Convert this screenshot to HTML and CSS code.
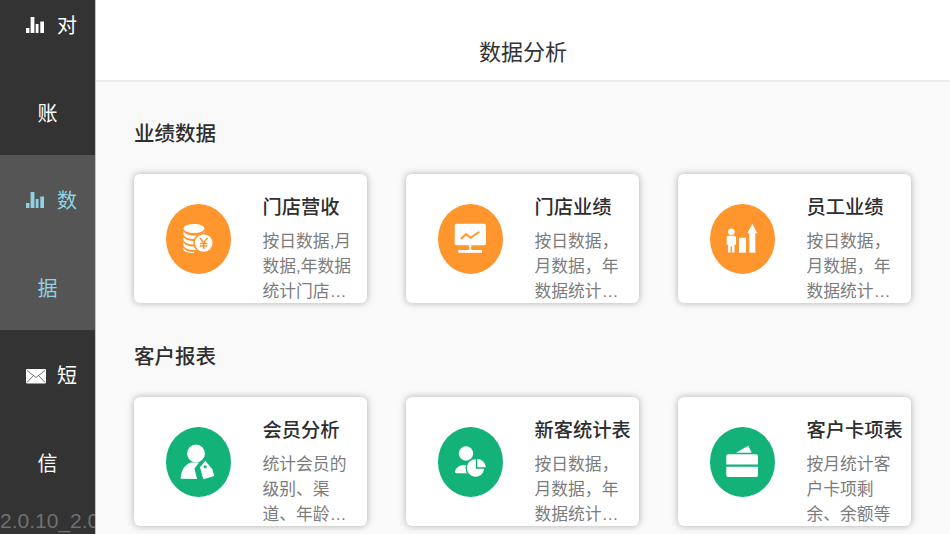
FILE: index.html
```html
<!DOCTYPE html>
<html lang="zh-CN">

<head>
  <meta charset="UTF-8">
  <title>数据分析</title>
  <link rel="stylesheet" href="styles.css">
</head>

<body>
  <aside class="sidebar">
    <nav class="nav">
      <a class="nav-item">
        <svg class="nav-icon" width="18" height="17" viewBox="0 0 18 17"><path d="M0 11h3.400v5H0zM4.600 0h3.800v16H4.600zM9.700 7h2.800v9H9.700zM14.300 4.500H18V16h-3.700z"/></svg>对账
      </a>
      <a class="nav-item active">
        <svg class="nav-icon" width="18" height="17" viewBox="0 0 18 17"><path d="M0 11h3.400v5H0zM4.600 0h3.800v16H4.600zM9.700 7h2.800v9H9.700zM14.300 4.500H18V16h-3.700z"/></svg>数据
      </a>
      <a class="nav-item">
        <svg class="nav-icon mail" width="20" height="15" viewBox="0 0 20 15"><rect width="20" height="14.500" rx="1"/><path class="mail-line" d="M1 1.500l9 7 9-7M1 13.500l6.500-7M19 13.500l-6.500-7"/></svg>短信
      </a>
    </nav>
    <div class="version">2.0.10_2.0.10</div>
  </aside>

  <main class="main">
    <header class="header">数据分析</header>

    <section class="section">
      <h2 class="section-title">业绩数据</h2>
      <div class="cards">
        <div class="card">
          <svg class="card-icon orange" viewBox="0 0 65 70">
            <ellipse class="bg" cx="32.500" cy="35" rx="32.500" ry="35"/>
            <ellipse class="fg" cx="28" cy="24.500" rx="10.500" ry="4.500"/>
            <path class="fg" d="M17.500 27c1 3 5.500 4.500 10.500 4.500s9.500-1.500 10.500-4.500v3.500c-1 3-5.500 4.500-10.500 4.500s-9.500-1.500-10.500-4.500zM17.500 32.500c1 3 5.500 4.500 10.500 4.500s9.500-1.500 10.500-4.500V36c-1 3-5.500 4.500-10.500 4.500S18.500 39 17.500 36zM17.500 38c1 3 5.500 4.500 10.500 4.500s9.500-1.500 10.500-4.500v3.500c-1 3-5.500 4.500-10.500 4.500S18.500 44.500 17.500 41.500zM17.500 43.500c1 3 5.500 4.500 10.500 4.500v1c-5 0-9.500-1-10.500-3z"/>
            <circle class="bg" cx="37.700" cy="39" r="10.500"/>
            <circle class="fg" cx="37.700" cy="39" r="8.800"/>
            <path class="cut" d="M33.800 33.800l3.900 5 3.900-5M37.700 38.800V45M34 39.500h7.400M34 42h7.400"/>
          </svg>
          <div class="card-text">
            <h3 class="card-title">门店营收</h3>
            <p class="card-desc">按日数据,月数据,年数据统计门店的营业收入</p>
          </div>
        </div>
        <div class="card">
          <svg class="card-icon orange" viewBox="0 0 65 70">
            <ellipse class="bg" cx="32.500" cy="35" rx="32.500" ry="35"/>
            <rect class="fg" x="16.700" y="19.700" width="31.300" height="21.500" rx="2"/>
            <path class="fg" d="M31 41h2.200v5H31zM20.300 46H44v2.700H20.300z"/>
            <path class="cut thick" d="M23 35l5-5 4.700 3.700 8.600-6"/>
          </svg>
          <div class="card-text">
            <h3 class="card-title">门店业绩</h3>
            <p class="card-desc">按日数据，月数据，年数据统计门店的业绩情况</p>
          </div>
        </div>
        <div class="card">
          <svg class="card-icon orange" viewBox="0 0 65 70">
            <ellipse class="bg" cx="32.500" cy="35" rx="32.500" ry="35"/>
            <circle class="fg" cx="21.300" cy="27.700" r="3.300"/>
            <path class="fg" d="M18.200 31.800h6.200a1.600 1.600 0 0 1 1.600 1.600v7.400h-1.500v7.600h-2.500v-6h-1.400v6h-2.500v-7.600h-1.400v-7.400a1.600 1.600 0 0 1 1.500-1.600zM29 33.700h7v15h-7zM42.300 19.700l5 9.600h-2v19.400h-6V29.300h-2z"/>
          </svg>
          <div class="card-text">
            <h3 class="card-title">员工业绩</h3>
            <p class="card-desc">按日数据，月数据，年数据统计员工的业绩情况</p>
          </div>
        </div>
      </div>
    </section>

    <section class="section">
      <h2 class="section-title">客户报表</h2>
      <div class="cards">
        <div class="card">
          <svg class="card-icon green" viewBox="0 0 65 70">
            <ellipse class="bg" cx="32.500" cy="35" rx="32.500" ry="35"/>
            <circle class="fg" cx="30" cy="26.500" r="8.900"/>
            <path class="fg" d="M14.800 50.500c.3-7 4-12.500 9.700-15h8.500l-4.500 6 2.500 10.500-15.500-.2a1.200 1.200 0 0 1-1.200-1.300z"/>
            <path class="fg" d="M39.300 33.800l7 8.500 2 6.700-11 3.300-3.300-12z"/>
            <circle class="bg" cx="39.200" cy="39.700" r="1.500"/>
          </svg>
          <div class="card-text">
            <h3 class="card-title">会员分析</h3>
            <p class="card-desc">统计会员的级别、渠道、年龄等信息数据</p>
          </div>
        </div>
        <div class="card">
          <svg class="card-icon green" viewBox="0 0 65 70">
            <ellipse class="bg" cx="32.500" cy="35" rx="32.500" ry="35"/>
            <circle class="fg" cx="28" cy="26.500" r="7.200"/>
            <path class="fg" d="M17 44.500c.4-3 3-5 6.500-6.200h9.500l-3.500 8H18.500a1.500 1.500 0 0 1-1.500-1.800z"/>
            <circle class="bg" cx="37.500" cy="41" r="10"/>
            <path class="fg" d="M37.800 32.300v9.500h8.400a8.700 8.700 0 1 1-8.400-9.500z"/>
            <path class="fg" d="M39.300 32a8.500 8.500 0 0 1 8.500 8.300h-8.500z"/>
          </svg>
          <div class="card-text">
            <h3 class="card-title">新客统计表</h3>
            <p class="card-desc">按日数据，月数据，年数据统计新客的数量</p>
          </div>
        </div>
        <div class="card">
          <svg class="card-icon green" viewBox="0 0 65 70">
            <ellipse class="bg" cx="32.500" cy="35" rx="32.500" ry="35"/>
            <path class="fg" d="M26 25.700l12.300-7 3.400 7z"/>
            <path class="fg" d="M18 27.300h28.300a1.700 1.700 0 0 1 1.700 1.700v8.500H16.300V29a1.700 1.700 0 0 1 1.700-1.700zM16.300 39.700H48v8.600a1.700 1.700 0 0 1-1.700 1.700H18a1.700 1.700 0 0 1-1.700-1.700z"/>
          </svg>
          <div class="card-text">
            <h3 class="card-title">客户卡项表</h3>
            <p class="card-desc">按月统计客户卡项剩余、余额等</p>
          </div>
        </div>
      </div>
    </section>
  </main>
</body>

</html>
```

FILE: styles.css
```css
body {
  margin: 0;
  display: flex;
  height: 534px;
  overflow: hidden;
  background-color: #f9f9f9;
  font-family: "Liberation Sans", "Noto Sans CJK SC", sans-serif;
}

.sidebar {
  position: relative;
  flex: 0 0 95px;
  overflow: hidden;
  background-color: #333;
  border-right: 1px solid #c4c4c4;
}

.nav {
  margin-top: -20px;
}

.nav-item {
  display: block;
  box-sizing: border-box;
  height: 175px;
  padding: 3px 10px 0;
  font-size: 20px;
  line-height: 87.5px;
  text-align: center;
  color: #fff;
}

.nav-item.active {
  background-color: #555;
  color: #8fd3e3;
}

.nav-icon {
  margin: 0 13px 0 8px;
  vertical-align: -1px;
  fill: #fff;
}

.nav-icon.mail {
  margin: 0 11.5px 0 7.5px;
}

.active .nav-icon {
  fill: #8fd3e3;
}

.mail-line {
  fill: none;
  stroke: #555;
  stroke-width: 0.8;
}

.version {
  position: absolute;
  left: 0;
  bottom: 1px;
  font-size: 21px;
  line-height: 24px;
  white-space: nowrap;
  color: #707070;
}

.main {
  flex: 1;
  min-width: 0;
}

.header {
  height: 80px;
  border-bottom: 2px solid #ececec;
  background-color: #fff;
  font-size: 22px;
  line-height: 106px;
  text-align: center;
  color: #333;
}

.section {
  padding: 26px 39px 0 38px;
}

.section + .section {
  padding-top: 28px;
}

.section-title {
  height: 50px;
  margin: 0 0 16px;
  font-size: 20.5px;
  font-weight: 500;
  line-height: 52px;
  color: #2e2e2e;
}

.cards {
  display: grid;
  grid-template-columns: repeat(3, 233px);
  gap: 39px;
}

.card {
  display: flex;
  align-items: center;
  height: 129px;
  border-radius: 6px;
  background-color: #fff;
  box-shadow: 0 0 7px rgba(0, 0, 0, 0.3);
}

.card-icon {
  flex: 0 0 65px;
  height: 70px;
  margin: 0 31.5px 0 32px;
}

.orange .bg {
  fill: #ff962d;
}

.green .bg {
  fill: #13b279;
}

.fg {
  fill: #fff;
}

.cut {
  fill: none;
  stroke: #ff962d;
  stroke-width: 1.5;
}

.cut.thick {
  stroke-width: 2;
}

.card-text {
  flex: 1;
  min-width: 0;
  align-self: flex-start;
  padding-top: 14px;
}

.card-title {
  margin: 0;
  font-size: 19.25px;
  font-weight: 500;
  line-height: 40px;
  white-space: nowrap;
  color: #2e2e2e;
}

.card-desc {
  display: -webkit-box;
  width: 92px;
  margin: 1px 0 0;
  overflow: hidden;
  font-size: 16.8px;
  line-height: 25px;
  color: #7c7c7c;
  -webkit-box-orient: vertical;
  -webkit-line-clamp: 3;
}
```
